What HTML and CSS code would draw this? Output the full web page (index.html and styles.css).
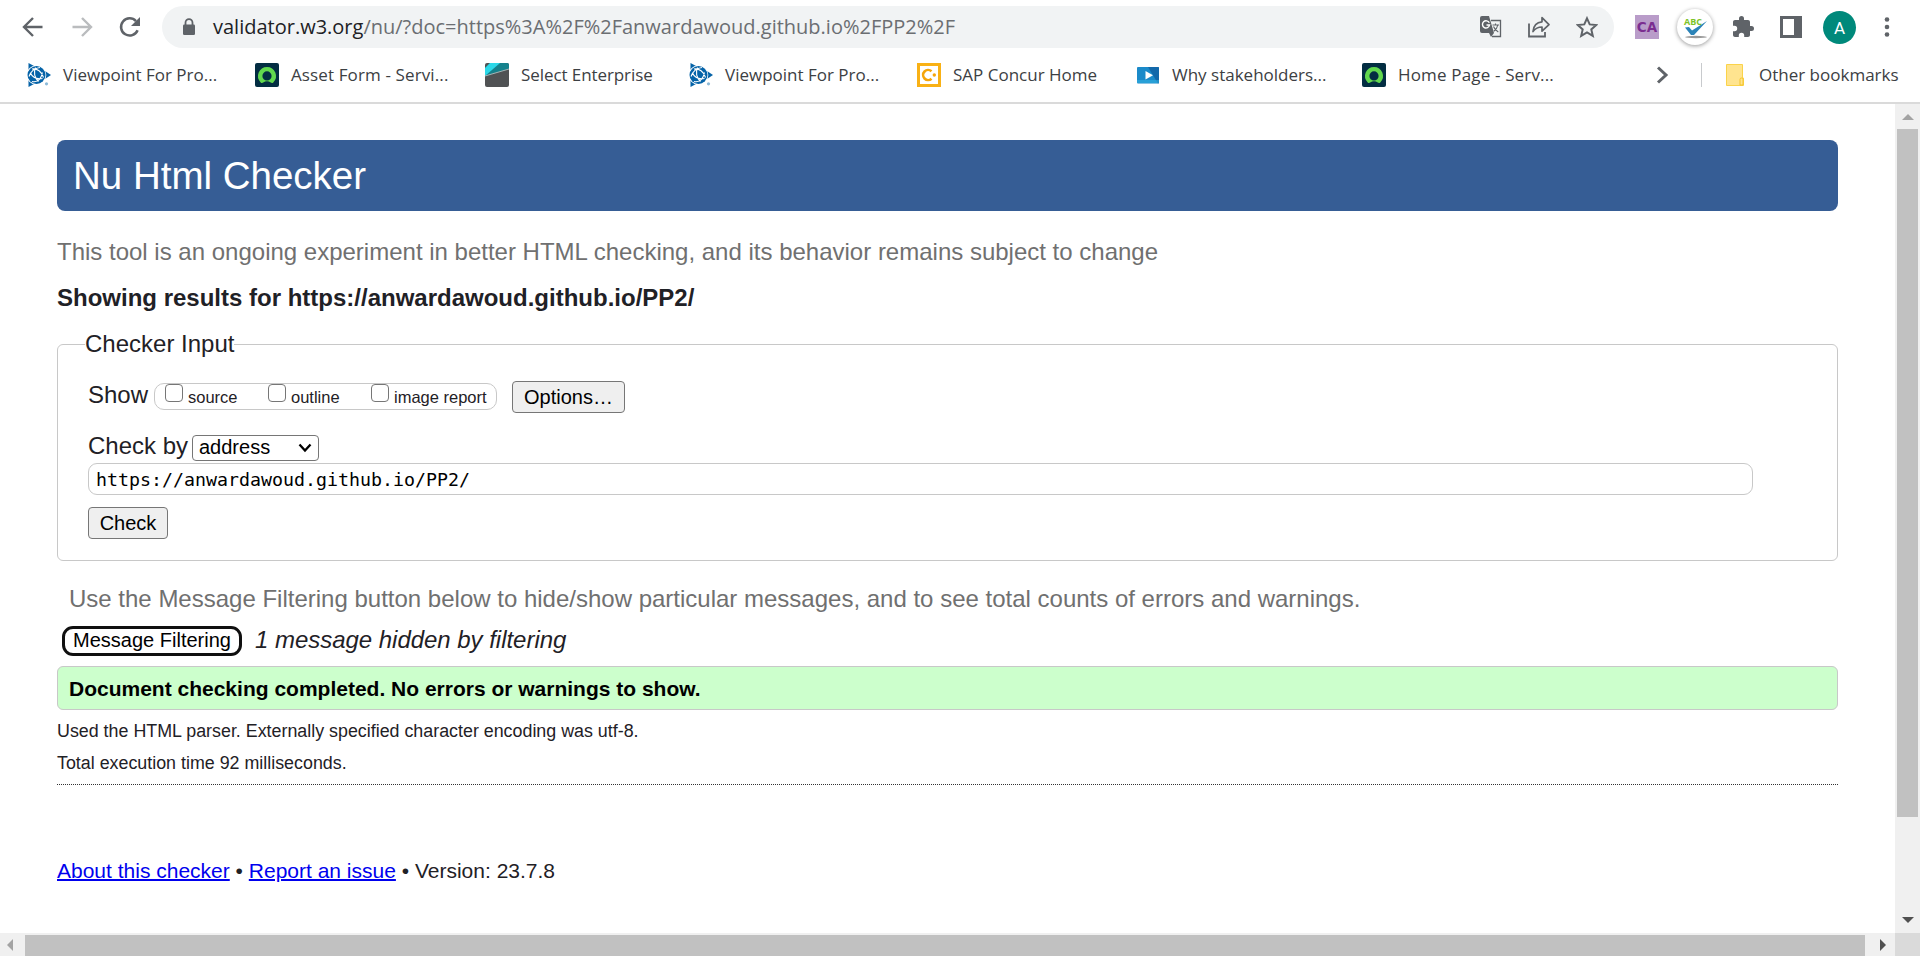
FILE: index.html
```html
<!DOCTYPE html>
<html lang="en">
<head>
<meta charset="utf-8">
<title>Nu Html Checker</title>
<link rel="stylesheet" href="styles.css">
</head>
<body>
<svg width="0" height="0" class="defs">
  <symbol id="globe" viewBox="0 0 24 24">
    <path d="M1.500 0L8 3.500 1.500 7zM24 12l-6-4v8zM1.500 24L8 20.500 1.500 17z" fill="#0563a8"/>
    <circle cx="9.500" cy="12" r="9.800" fill="#fff"/>
    <circle cx="9.500" cy="12" r="9" fill="#0563a8"/>
    <path d="M2 13.500C4 8 8 5 13 4.500M5 6c5-1 10 3 11.500 8.500M5 18.500c5 1 9-2 10.500-9M3.500 10c2 4.500 6 6.500 12 5.500M8.500 4.500c-2 5-1 10 3 14" fill="none" stroke="#fff" stroke-width="1.100"/>
    <circle cx="19.500" cy="20.800" r="1.600" fill="#8dbad8"/>
  </symbol>
  <symbol id="ring" viewBox="0 0 24 24">
    <rect width="24" height="24" rx="2" fill="#032d42"/>
    <path d="M12 4a9 9 0 0 0-6.300 15.400c.7.700 1.700.7 2.500.2a6.500 6.500 0 0 1 7.600 0c.8.500 1.800.5 2.500-.2A9 9 0 0 0 12 4zm0 13.500a4.600 4.600 0 1 1 0-9.200 4.600 4.600 0 0 1 0 9.200z" fill="#62d84e"/>
  </symbol>
</svg>
<header class="browser">
  <div class="toolbar">
    <svg class="nav back" width="24" height="24" viewBox="0 0 24 24"><path d="M21.500 12H3.500M12 3L3 12l9 9" fill="none" stroke="#5f6368" stroke-width="2.400"/></svg>
    <svg class="nav fwd" width="24" height="24" viewBox="0 0 24 24"><path d="M2.500 12h18M12 3l9 9-9 9" fill="none" stroke="#babcbe" stroke-width="2.400"/></svg>
    <svg class="nav reload" width="24" height="24" viewBox="0 0 24 24"><path d="M19.600 15.300A8.600 8.600 0 1 1 18 6.100" fill="none" stroke="#5f6368" stroke-width="2.500"/><path d="M22 2v9h-9z" fill="#5f6368"/></svg>
    <div class="omnibox">
      <svg class="lock" width="14" height="18" viewBox="0 0 14 18"><path d="M3.500 7V4.700a3.500 3.500 0 0 1 7 0V7" fill="none" stroke="#5f6368" stroke-width="1.800"/><rect x="1" y="6.500" width="12" height="10.500" rx="1.300" fill="#5f6368"/></svg>
      <span class="url"><span class="host">validator.w3.org</span>/nu/?doc=https%3A%2F%2Fanwardawoud.github.io%2FPP2%2F</span>
      <svg class="translate" width="22" height="22" viewBox="0 0 22 22"><path d="M11 4.500h9.500v16H12" fill="#f1f3f4" stroke="#5f6368" stroke-width="1.300"/><path d="M2 0h7l5 17H2a2 2 0 0 1-2-2V2a2 2 0 0 1 2-2zM9 17h5l-3 4z" fill="#5f6368"/><path d="M9.300 6.800A3.600 3.600 0 1 0 9.600 9H6.500" fill="none" stroke="#fff" stroke-width="1.400"/><path d="M12.500 9h6.500M15.500 7.500V9M17.800 9c-.5 3-2.300 5-4 6.300M13.500 10.500c1 2.500 3 4.500 4.800 5.500" fill="none" stroke="#5f6368" stroke-width="1.100"/></svg>
      <svg class="share" width="24" height="22" viewBox="0 0 24 22"><path d="M2 7.500V20.500h16V16" fill="none" stroke="#5f6368" stroke-width="1.800"/><path d="M6 15.500C6.500 9.500 10 6.300 15 5.800V1.700l7 7-7 6.500v-4.200c-4 0-6.500 1.200-9 4.500z" fill="none" stroke="#5f6368" stroke-width="1.700" stroke-linejoin="round"/></svg>
      <svg class="star" width="22" height="22" viewBox="0 0 22 22"><path d="M11 2.300l2.700 6.100 6.600.6-5 4.400 1.500 6.500-5.800-3.500-5.800 3.500 1.500-6.500-5-4.400 6.600-.6z" fill="none" stroke="#5f6368" stroke-width="2"/></svg>
    </div>
    <span class="ca">CA</span>
    <span class="abc"><svg width="36" height="36" viewBox="0 0 36 36"><ellipse cx="19" cy="28" rx="11" ry="1.200" fill="#999"/><path d="M8 18.500l4-.5 3 3.500L30 12 17 26h-3z" fill="#2b83b8"/><text class="abc-text" x="7" y="15.500" textLength="18" lengthAdjust="spacingAndGlyphs">ABC</text></svg></span>
    <svg class="puzzle" width="24" height="24" viewBox="0 0 24 24"><path d="M20.500 11H19V7c0-1.100-.9-2-2-2h-4V3.500a2.500 2.500 0 0 0-5 0V5H4c-1.100 0-2 .9-2 2v3.800h1.500a2.700 2.700 0 0 1 0 5.400H2V20c0 1.100.9 2 2 2h3.800v-1.500a2.700 2.700 0 0 1 5.400 0V22H17c1.100 0 2-.9 2-2v-4h1.500a2.500 2.500 0 0 0 0-5z" fill="#5f6368"/></svg>
    <svg class="panel" width="22" height="22" viewBox="0 0 22 22"><path d="M0 0h22v22H0zM3 3v16h11V3z" fill="#5f6368" fill-rule="evenodd"/></svg>
    <span class="avatar">A</span>
    <svg class="menu" width="6" height="20" viewBox="0 0 6 20"><g fill="#5f6368"><circle cx="3" cy="2.500" r="2.300"/><circle cx="3" cy="10" r="2.300"/><circle cx="3" cy="17.500" r="2.300"/></g></svg>
  </div>
  <nav class="bookmarks">
    <span class="bm"><svg class="fav"><use href="#globe"/></svg><span class="t1">Viewpoint For Pro...</span></span>
    <span class="bm"><svg class="fav"><use href="#ring"/></svg><span class="t2">Asset Form - Servi...</span></span>
    <span class="bm"><svg class="fav" viewBox="0 0 24 24"><rect width="24" height="24" rx="2" fill="#505254"/><path d="M0 13V5l5-5h17a2 2 0 0 1 2 2v4z" fill="#15818c"/><path d="M0 13V5l5-5h10z" fill="#2bd8e8"/><path d="M0 13L24 6" stroke="#a5b4b6"/></svg><span class="t3">Select Enterprise</span></span>
    <span class="bm"><svg class="fav"><use href="#globe"/></svg><span class="t1">Viewpoint For Pro...</span></span>
    <span class="bm"><svg class="fav" viewBox="0 0 24 24"><rect x="1.500" y="1.500" width="21" height="21" fill="#fff" stroke="#f9b115" stroke-width="3"/><path d="M14.500 8.300A5 5 0 1 0 14.500 15.700" fill="none" stroke="#f5a50b" stroke-width="2.600"/><circle cx="17.300" cy="12" r="1.700" fill="#f5a50b"/></svg><span class="t5">SAP Concur Home</span></span>
    <span class="bm"><svg class="fav" viewBox="0 0 24 24"><rect x="1" y="4" width="22" height="16.500" rx="1" fill="#1b8ac9"/><path d="M12 4h10a1 1 0 0 1 1 1v14.500a1 1 0 0 1-1 1z" fill="#1268aa"/><path d="M1 17h22v3H1z" fill="#36b5e5" opacity=".5"/><path d="M9.500 8v8.500l7.500-4.200z" fill="#fff"/></svg><span class="t6">Why stakeholders...</span></span>
    <span class="bm"><svg class="fav"><use href="#ring"/></svg><span class="t7">Home Page - Serv...</span></span>
    <svg class="more" width="14" height="18" viewBox="0 0 14 18"><path d="M2 1.500L10 9l-8 7.500" fill="none" stroke="#5f6368" stroke-width="3"/></svg>
    <span class="sep"></span>
    <svg class="folder" width="18" height="22" viewBox="0 0 18 22"><path d="M.5.500h16v13.500h1v7.500H.5z" fill="#ffe48f" stroke="#fbd34a"/><path d="M14 21v-5.500a1.500 1.500 0 0 1 3 0V21z" fill="#ffe48f" stroke="#f5c52c"/></svg>
    <span class="t8">Other bookmarks</span>
  </nav>
</header>
<div class="viewport">
  <main class="page">
    <h1 class="title"><span>Nu Html Checker</span></h1>
    <p class="tagline"><span>This tool is an ongoing experiment in better HTML checking, and its behavior remains subject to change</span></p>
    <h2 class="results"><span>Showing results for https://anwardawoud.github.io/PP2/</span></h2>
    <fieldset class="input-box">
      <legend>Checker Input</legend>
      <div class="row show">
        <span class="label">Show</span>
        <span class="checks">
          <label><input type="checkbox"><span>source</span></label>
          <label><input type="checkbox"><span>outline</span></label>
          <label><input type="checkbox"><span>image report</span></label>
        </span>
        <button class="btn options">Options…</button>
      </div>
      <div class="row by">
        <span class="label">Check by</span>
        <span class="select">address<svg width="14" height="10" viewBox="0 0 14 10"><path d="M1.500 1.500L7 7.500l5.500-6" fill="none" stroke="#000" stroke-width="2.300"/></svg></span>
      </div>
      <div class="address"><span>https://anwardawoud.github.io/PP2/</span></div>
      <button class="btn check">Check</button>
    </fieldset>
    <p class="hint"><span>Use the Message Filtering button below to hide/show particular messages, and to see total counts of errors and warnings.</span></p>
    <div class="filter"><button class="filter-btn">Message Filtering</button><em>1 message hidden by filtering</em></div>
    <p class="success"><span>Document checking completed. No errors or warnings to show.</span></p>
    <p class="detail"><span>Used the HTML parser. Externally specified character encoding was utf-8.</span></p>
    <p class="detail"><span>Total execution time 92 milliseconds.</span></p>
    <hr>
    <footer><a href="#">About this checker</a> • <a href="#">Report an issue</a> • <span>Version: 23.7.8</span></footer>
  </main>
  <div class="vbar">
    <svg width="12" height="6" viewBox="0 0 12 6"><path d="M0 6l6-6 6 6z" fill="#a3a3a3"/></svg>
    <div class="vthumb"></div>
    <svg width="12" height="6" viewBox="0 0 12 6"><path d="M0 0h12L6 6z" fill="#505050"/></svg>
  </div>
  <div class="hbar">
    <svg width="6" height="12" viewBox="0 0 6 12"><path d="M6 0v12L0 6z" fill="#a3a3a3"/></svg>
    <div class="hthumb"></div>
    <svg width="6" height="12" viewBox="0 0 6 12"><path d="M0 0v12l6-6z" fill="#505050"/></svg>
  </div>
  <div class="corner"></div>
</div>
</body>
</html>
```
FILE: styles.css
```css
* { box-sizing: border-box; }
body {
  margin: 0;
  width: 1920px;
  height: 956px;
  overflow: hidden;
  background: #fff;
  font-family: "Liberation Sans", Arial, sans-serif;
}
p, h1, h2 { margin: 0; }
svg { display: block; flex: none; }
.defs { position: absolute; }

/* Browser chrome */
.browser {
  height: 104px;
  border-bottom: 2px solid #dadada;
  font-family: "Open Sans", "Noto Sans", sans-serif;
  white-space: nowrap;
}
.toolbar { display: flex; align-items: center; height: 54px; padding-left: 21px; }
.nav { margin-right: 25px; }
.fwd { margin-right: 24px; }
.reload { margin-right: 20px; }
.omnibox {
  display: flex;
  align-items: center;
  width: 1452px;
  height: 42px;
  padding-left: 20px;
  border-radius: 21px;
  background: #f1f3f4;
}
.url { width: 1267px; margin-left: 17px; font-size: 20px; line-height: 42px; color: #6b6e72; }
.host { color: #202124; }
.share { margin-left: 25px; }
.star { margin-left: 25px; }
.ca {
  width: 24px;
  height: 24px;
  margin-left: 21px;
  background: #b99cc9;
  color: #7b2d90;
  font: bold 13.5px/25px "DejaVu Sans", sans-serif;
  text-align: center;
}
.abc {
  width: 36px;
  height: 36px;
  margin-left: 18px;
  border-radius: 50%;
  background: #fff;
  box-shadow: 0 1px 4px rgba(0, 0, 0, .4);
}
.abc-text { font: bold 9px "Open Sans", sans-serif; fill: #7cc328; }
.puzzle { margin-left: 18px; }
.panel { margin-left: 25px; }
.avatar {
  width: 33px;
  height: 33px;
  margin-left: 21px;
  border-radius: 50%;
  background: #00897b;
  color: #fff;
  font: 17px/34px Roboto, sans-serif;
  text-align: center;
}
.menu { margin-left: 28px; }
.bookmarks {
  display: grid;
  grid-template-columns: 228px 230px 204px 228px 219px 226px 294px 45px 25px 33px auto;
  align-items: center;
  height: 42px;
  padding-left: 27px;
  font-size: 17px;
  color: #3c4043;
}
.bookmarks span { line-height: 22px; padding-bottom: 1px; }
.bm { display: flex; align-items: center; gap: 12px; }
.bookmarks .bm { padding-bottom: 0; }
.t2 { letter-spacing: .12px; }
.t3 { letter-spacing: -.08px; }
.t7 { letter-spacing: .16px; }
.fav { width: 24px; height: 24px; }
.sep { width: 1px; height: 24px; background: #c8cacd; }

/* Document area */
.viewport {
  display: grid;
  grid-template: 829px 23px / 1895px 25px;
}
.page { padding: 36px 57px 0; color: #1f2126; font-size: 24px; white-space: nowrap; overflow: hidden; }
.title {
  height: 71px;
  padding-left: 16px;
  border-radius: 8px;
  background: #365d95;
  color: #fff;
  font-size: 38.5px;
  font-weight: 400;
  line-height: 71px;
}
.tagline { margin-top: 25px; line-height: 32px; color: #707070; }
.results { margin-top: 14px; font-size: 24px; line-height: 32px; }
.input-box {
  height: 233px;
  margin: 14px 0 0;
  padding: 0 0 0 30px;
  border: 1px solid #c8c8c8;
  border-radius: 6px;
}
legend { height: 32px; margin-left: -3px; padding: 0; line-height: 32px; }
.row { display: flex; align-items: center; }
.show { height: 32px; margin-top: 21px; }
.show .label { width: 66px; padding-bottom: 5px; line-height: 26px; }
.checks {
  display: grid;
  grid-template-columns: 103px 103px auto;
  width: 343px;
  height: 27px;
  margin-bottom: 1px;
  padding-left: 10px;
  border: 1px solid #c8c8c8;
  border-radius: 10px;
  font-size: 16.5px;
  line-height: 27px;
}
.checks label { display: flex; }
.checks input {
  appearance: none;
  width: 18px;
  height: 18px;
  margin: 0 5px 0 0;
  border: 1.500px solid #767676;
  border-radius: 4px;
  background: #fff;
}
.btn {
  height: 32px;
  padding: 0;
  border: 1.500px solid #767676;
  border-radius: 4px;
  background: #efefef;
  color: #000;
  font: 20px/28px "Liberation Sans", Arial, sans-serif;
}
.options { width: 113px; margin-left: 15px; }
.by { height: 27px; margin-top: 21px; }
.by .label { width: 104px; padding-bottom: 4px; line-height: 26px; }
.select {
  display: flex;
  align-items: center;
  justify-content: space-between;
  width: 127px;
  height: 26px;
  padding: 0 6px 0 6px;
  border: 1px solid #767676;
  border-radius: 4px;
  color: #000;
  font-size: 20px;
}
.address {
  width: 1665px;
  height: 32px;
  margin-top: 2px;
  padding-left: 7px;
  border: 1px solid #c8c8c8;
  border-radius: 9px;
  color: #000;
  font: 18.270px/31px "DejaVu Sans Mono", monospace;
}
.check { display: block; width: 80px; margin-top: 12px; }
.hint { margin-top: 22px; padding-left: 12px; line-height: 32px; color: #707070; }
.filter { display: flex; align-items: center; height: 30px; margin-top: 11px; padding-left: 5px; }
.filter-btn {
  width: 180px;
  height: 30px;
  margin-right: 13px;
  padding: 0 0 2px;
  border: 3px solid #101010;
  border-radius: 11px;
  background: #fff;
  color: #000;
  font: 20px/22px "Liberation Sans", Arial, sans-serif;
}
.filter em { padding-bottom: 3px; line-height: 27px; letter-spacing: -.03px; }
.success {
  height: 44px;
  margin-top: 10px;
  padding-left: 11px;
  border: 1px solid #c8c8c8;
  border-radius: 6px;
  background: #cfc;
  color: #000;
  font-size: 21px;
  font-weight: 700;
  line-height: 44px;
}
.detail { font-size: 17.850px; line-height: 32px; }
.success + .detail { margin-top: 5px; }
hr { height: 0; margin: 5px 0 0; border: 0; border-top: 1px dotted #333; }
footer { margin-top: 70px; font-size: 21px; line-height: 32px; }
footer a { color: #0000ee; text-decoration-thickness: 2px; }

.vbar, .hbar { display: flex; align-items: center; background: #f0f0f0; }
.vbar { flex-direction: column; padding-top: 10px; }
.vthumb { width: 21px; height: 688px; margin: 9px 0 100px; background: #c1c1c1; }
.hbar { padding-left: 7px; }
.hthumb { align-self: flex-end; width: 1840px; height: 21px; margin: 0 15px 0 12px; background: #c1c1c1; }
.corner { background: #dadada; }
```
